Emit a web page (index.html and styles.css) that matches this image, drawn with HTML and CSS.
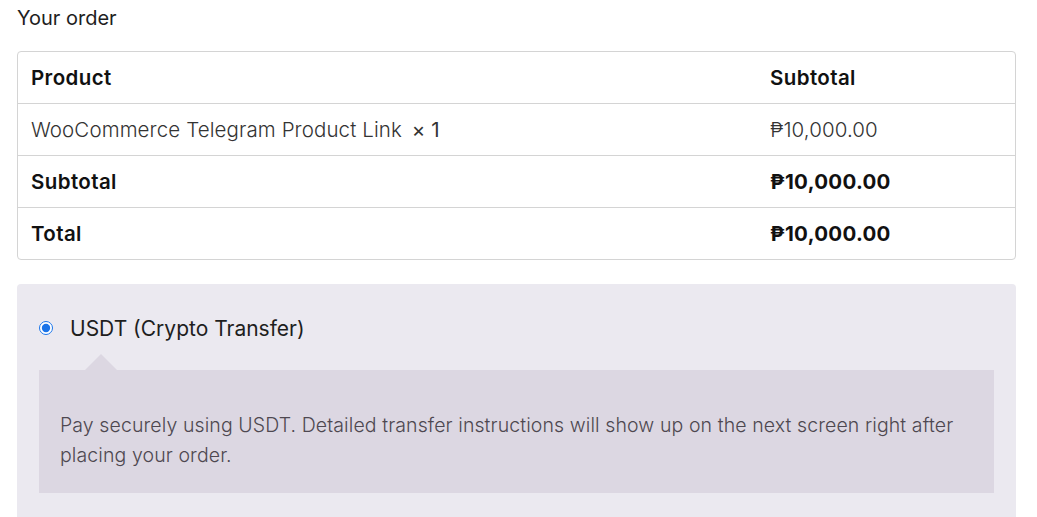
FILE: index.html
```html
<!DOCTYPE html>
<html lang="en">
<head>
  <meta charset="UTF-8">
  <title>Checkout</title>
  <link rel="stylesheet" href="styles.css">
</head>
<body>
  <h3 class="order-heading">Your order</h3>

  <table class="order-table">
    <colgroup>
      <col class="col-product">
      <col class="col-total">
    </colgroup>
    <thead>
      <tr>
        <th>Product</th>
        <th>Subtotal</th>
      </tr>
    </thead>
    <tbody>
      <tr class="cart-item">
        <td>WooCommerce Telegram Product Link <span class="qty">×&nbsp;1</span></td>
        <td>₱10,000.00</td>
      </tr>
    </tbody>
    <tfoot>
      <tr>
        <th>Subtotal</th>
        <td class="strong">₱10,000.00</td>
      </tr>
      <tr>
        <th>Total</th>
        <td class="strong">₱10,000.00</td>
      </tr>
    </tfoot>
  </table>

  <div class="payment">
    <label class="method">
      <input type="radio" name="payment_method" checked>
      <span>USDT (Crypto Transfer)</span>
    </label>
    <div class="payment-box">
      <p>Pay securely using USDT. Detailed transfer instructions will show up on the next screen right after placing your order.</p>
    </div>
  </div>
</body>
</html>
```

FILE: styles.css
```css
body {
  margin: 0;
  padding: 0 21px 0 17px;
  font-family: Inter, "Noto Sans", sans-serif;
  color: #1e1e1e;
  background: #fff;
}
.order-heading {
  margin: 5px 0 0;
  font-size: 20px;
  font-weight: 400;
  line-height: 26px;
  height: 46px;
}
.order-table {
  width: 100%;
  border-collapse: separate;
  border-spacing: 0;
  border: 1px solid #d4d4d4;
  border-radius: 4px;
  table-layout: fixed;
  font-size: 20.5px;
}
.col-product {
  width: 739px;
}
.order-table th,
.order-table td {
  text-align: left;
  padding: 0 13px;
  height: 51px;
  border-top: 1px solid #d4d4d4;
}
.order-table thead th {
  border-top: none;
}
.order-table th {
  font-weight: 600;
  color: #111;
  letter-spacing: 0.4px;
}
.order-table td {
  font-weight: 300;
  color: #333;
  letter-spacing: 0.1px;
}
.order-table td.strong {
  font-weight: 700;
  color: #111;
  letter-spacing: 0.3px;
}
.qty {
  margin-left: 4px;
  font-weight: 400;
}
.payment {
  margin-top: 24px;
  background: #ebe9f0;
  border-radius: 4px 4px 0 0;
  padding: 22px 22px 26px;
}
.method {
  display: flex;
  align-items: center;
  gap: 17px;
  font-size: 21px;
  color: #1e1e1e;
  height: 44px;
}
.method input {
  margin: 0;
  width: 14px;
  height: 14px;
  accent-color: #1a73e8;
}
.payment-box {
  position: relative;
  margin-top: 20px;
  background: #dcd7e2;
  padding: 40px 21px 23px;
}
.payment-box::before {
  content: "";
  position: absolute;
  top: -16px;
  left: 46px;
  border: 16px solid transparent;
  border-top: none;
  border-bottom-color: #dcd7e2;
}
.payment-box p {
  margin: 0;
  font-size: 19.5px;
  line-height: 30px;
  font-weight: 300;
  letter-spacing: 0.1px;
  color: #4e4850;
}
```
